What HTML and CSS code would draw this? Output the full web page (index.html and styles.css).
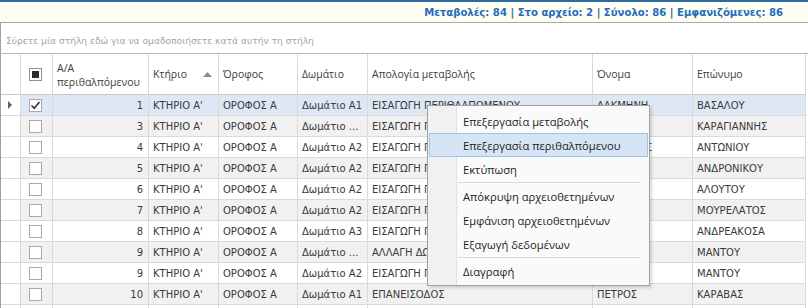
FILE: index.html
```html
<!DOCTYPE html>
<html>
<head>
<meta charset="utf-8">
<link rel="stylesheet" href="styles.css">
</head>
<body>
<div class="topline"></div>
<div class="status">Μεταβολές: 84 | Στο αρχείο: 2 | Σύνολο: 86 | Εμφανιζόμενες: 86</div>
<div class="group">Σύρετε μία στήλη εδώ για να ομαδοποιήσετε κατά αυτήν τη στήλη</div>
<div class="grid">
<table>
<colgroup>
<col class="c-ind"><col class="c-chk"><col class="c-aa"><col class="c-kt"><col class="c-or"><col class="c-dom"><col class="c-apo"><col class="c-name"><col class="c-sur">
</colgroup>
<thead>
<tr>
<th class="ind"></th>
<th class="chk"><span class="box box-ind"><span class="sq"></span></span></th>
<th class="two">A/A<br>περιθαλπόμενου</th>
<th><div class="sorth"><span>Κτήριο</span><svg class="arrow" width="9" height="5" viewBox="0 0 9 5"><path d="M0 5 L4.5 0 L9 5 Z" fill="#8a8a8a"/></svg></div></th>
<th>Όροφος</th>
<th>Δωμάτιο</th>
<th>Απολογία μεταβολής</th>
<th>Όνομα</th>
<th>Επώνυμο</th>
</tr>
</thead>
<tbody>
<tr class="sel">
<td class="ind"><span class="tri"></span></td>
<td class="chk"><span class="box"><svg width="11" height="11" viewBox="0 0 11 11"><path d="M1.5 5.5 L4.2 8.2 L9.5 2" fill="none" stroke="#333" stroke-width="1.6"/></svg></span></td>
<td class="num">1</td><td>ΚΤΗΡΙΟ Α'</td><td>ΟΡΟΦΟΣ Α</td><td>Δωμάτιο Α1</td><td>ΕΙΣΑΓΩΓΗ ΠΕΡΙΘΑΛΠΟΜΕΝΟΥ</td><td>ΑΛΚΜΗΝΗ</td><td>ΒΑΣΑΛΟΥ</td>
</tr>
<tr class="alt">
<td class="ind"></td><td class="chk"><span class="box"></span></td>
<td class="num">3</td><td>ΚΤΗΡΙΟ Α'</td><td>ΟΡΟΦΟΣ Α</td><td>Δωμάτιο ...</td><td>ΕΙΣΑΓΩΓΗ ΠΕΡΙΘΑΛΠΟΜΕΝΟΥ</td><td>ΜΑΡΙΑ</td><td>ΚΑΡΑΓΙΑΝΝΗΣ</td>
</tr>
<tr>
<td class="ind"></td><td class="chk"><span class="box"></span></td>
<td class="num">4</td><td>ΚΤΗΡΙΟ Α'</td><td>ΟΡΟΦΟΣ Α</td><td>Δωμάτιο Α2</td><td>ΕΙΣΑΓΩΓΗ ΠΕΡΙΘΑΛΠΟΜΕΝΟΥ</td><td>ΣΤΕΦΑΝΟΣ</td><td>ΑΝΤΩΝΙΟΥ</td>
</tr>
<tr class="alt">
<td class="ind"></td><td class="chk"><span class="box"></span></td>
<td class="num">5</td><td>ΚΤΗΡΙΟ Α'</td><td>ΟΡΟΦΟΣ Α</td><td>Δωμάτιο Α2</td><td>ΕΙΣΑΓΩΓΗ ΠΕΡΙΘΑΛΠΟΜΕΝΟΥ</td><td>ΕΛΕΝΗ</td><td>ΑΝΔΡΟΝΙΚΟΥ</td>
</tr>
<tr>
<td class="ind"></td><td class="chk"><span class="box"></span></td>
<td class="num">6</td><td>ΚΤΗΡΙΟ Α'</td><td>ΟΡΟΦΟΣ Α</td><td>Δωμάτιο Α2</td><td>ΕΙΣΑΓΩΓΗ ΠΕΡΙΘΑΛΠΟΜΕΝΟΥ</td><td>ΑΝΝΑ</td><td>ΑΛΟΥΤΟΥ</td>
</tr>
<tr class="alt">
<td class="ind"></td><td class="chk"><span class="box"></span></td>
<td class="num">7</td><td>ΚΤΗΡΙΟ Α'</td><td>ΟΡΟΦΟΣ Α</td><td>Δωμάτιο Α2</td><td>ΕΙΣΑΓΩΓΗ ΠΕΡΙΘΑΛΠΟΜΕΝΟΥ</td><td>ΝΙΚΟΛΑΣ</td><td>ΜΟΥΡΕΛΑΤΟΣ</td>
</tr>
<tr>
<td class="ind"></td><td class="chk"><span class="box"></span></td>
<td class="num">8</td><td>ΚΤΗΡΙΟ Α'</td><td>ΟΡΟΦΟΣ Α</td><td>Δωμάτιο Α3</td><td>ΕΙΣΑΓΩΓΗ ΠΕΡΙΘΑΛΠΟΜΕΝΟΥ</td><td>ΣΟΦΙΑ</td><td>ΑΝΔΡΕΑΚΟΣΑ</td>
</tr>
<tr class="alt">
<td class="ind"></td><td class="chk"><span class="box"></span></td>
<td class="num">9</td><td>ΚΤΗΡΙΟ Α'</td><td>ΟΡΟΦΟΣ Α</td><td>Δωμάτιο ...</td><td>ΑΛΛΑΓΗ ΔΩΜΑΤΙΟΥ</td><td>ΙΩΑΝΝΑ</td><td>ΜΑΝΤΟΥ</td>
</tr>
<tr>
<td class="ind"></td><td class="chk"><span class="box"></span></td>
<td class="num">9</td><td>ΚΤΗΡΙΟ Α'</td><td>ΟΡΟΦΟΣ Α</td><td>Δωμάτιο Α2</td><td>ΕΙΣΑΓΩΓΗ ΠΕΡΙΘΑΛΠΟΜΕΝΟΥ</td><td>ΙΩΑΝΝΑ</td><td>ΜΑΝΤΟΥ</td>
</tr>
<tr class="alt">
<td class="ind"></td><td class="chk"><span class="box"></span></td>
<td class="num">10</td><td>ΚΤΗΡΙΟ Α'</td><td>ΟΡΟΦΟΣ Α</td><td>Δωμάτιο Α1</td><td>ΕΠΑΝΕΙΣΟΔΟΣ</td><td>ΠΕΤΡΟΣ</td><td>ΚΑΡΑΒΑΣ</td>
</tr>
<tr>
<td class="ind"></td><td class="chk"></td>
<td class="num"></td><td></td><td></td><td></td><td></td><td></td><td></td>
</tr>
</tbody>
</table>
</div>
<div class="menu">
<div class="mi">Επεξεργασία μεταβολής</div>
<div class="mi hl">Επεξεργασία περιθαλπόμενου</div>
<div class="mi">Εκτύπωση</div>
<div class="sep"></div>
<div class="mi">Απόκρυψη αρχειοθετημένων</div>
<div class="mi">Εμφάνιση αρχειοθετημένων</div>
<div class="mi">Εξαγωγή δεδομένων</div>
<div class="sep"></div>
<div class="mi">Διαγραφή</div>
</div>
</body>
</html>
```
FILE: styles.css
```css
* { box-sizing: border-box; }
html, body { margin: 0; padding: 0; }
body {
  width: 808px;
  height: 308px;
  overflow: hidden;
  background: #fff;
  font-family: "DejaVu Sans", sans-serif;
  position: relative;
}
.topline { height: 2px; background: #2d6aa1; }
.status {
  height: 21px;
  background: #fdfdf2;
  border-bottom: 1px solid #a8a8a8;
  display: flex;
  justify-content: flex-end;
  align-items: center;
  padding-right: 25px;
  color: #1d6dc0;
  font-weight: bold;
  font-size: 10.1px;
}
.group {
  height: 31px;
  border-left: 1px solid #a0a0a0;
  border-bottom: 1px solid #b8b8b8;
  padding: 5px 0 0 5px;
  display: flex;
  align-items: center;
  color: #a5a5a5;
  font-size: 9.15px;
}
.grid { border-left: 1px solid #a0a0a0; height: 254px; overflow: hidden; }
table {
  table-layout: fixed;
  border-collapse: separate;
  border-spacing: 0;
  width: 805px;
  color: #3a3a3a;
  font-size: 10px;
}
.c-ind { width: 20px; }
.c-chk { width: 32px; }
.c-aa { width: 96px; }
.c-kt { width: 70px; }
.c-or { width: 79px; }
.c-dom { width: 70px; }
.c-apo { width: 225px; }
.c-name { width: 100px; }
.c-sur { width: 113px; }
th {
  height: 41px;
  padding: 0 4px;
  font-family: "Open Sans", sans-serif;
  font-size: 10.5px;
  font-weight: normal;
  color: #3c3c3c;
  text-align: left;
  border-right: 1px solid #d9d9d9;
  border-bottom: 1px solid #c9c9c9;
  background: #fff;
}
th.two { line-height: 14px; padding-top: 1px; }
.sorth { display: flex; justify-content: space-between; align-items: center; }
.arrow { margin-right: 2px; }
td {
  height: 21px;
  padding: 0 4px;
  border-right: 1px solid #dadada;
  border-bottom: 1px solid #dadada;
  white-space: nowrap;
  overflow: hidden;
}
tbody tr td { background: #fff; }
tbody tr.alt td { background: #f1f1f1; }
tbody tr.sel td { background: #dde8f4; }
tbody tr td.ind { background: #fff; padding: 0 0 0 7px; }
td.num { text-align: right; padding-right: 5px; }
td.chk, th.chk { text-align: center; padding: 0; }
.box {
  display: inline-flex;
  align-items: center;
  justify-content: center;
  width: 13px;
  height: 13px;
  border: 1px solid #a9a9a9;
  background: #fff;
  vertical-align: middle;
  margin-left: -2px;
}
.box-ind { border-color: #8f8f8f; }
.sq { width: 7px; height: 7px; background: #2b2b2b; }
.tri {
  display: block;
  width: 0;
  height: 0;
  border-left: 4px solid #606060;
  border-top: 4px solid transparent;
  border-bottom: 4px solid transparent;
}
.menu {
  position: absolute;
  left: 427px;
  top: 105px;
  width: 223px;
  border: 1px solid #a0a0a0;
  background: linear-gradient(to right, #f1f1f1 0, #f1f1f1 28px, #e2e2e2 28px, #e2e2e2 29px, #fafafa 29px);
  padding: 3px 1px 2px;
  box-shadow: 2px 2px 3px rgba(0,0,0,0.15);
  font-family: "Open Sans", sans-serif;
  font-size: 11.2px;
  color: #1e1e1e;
}
.mi {
  height: 24px;
  display: flex;
  align-items: center;
  padding-left: 34px;
}
.mi.hl {
  background: #d5e5f6;
  border: 1px solid #a3c3e8;
  padding-left: 33px;
}
.sep {
  height: 1px;
  background: #d9d9d9;
  margin: 1px 8px 1px 29px;
}
```
